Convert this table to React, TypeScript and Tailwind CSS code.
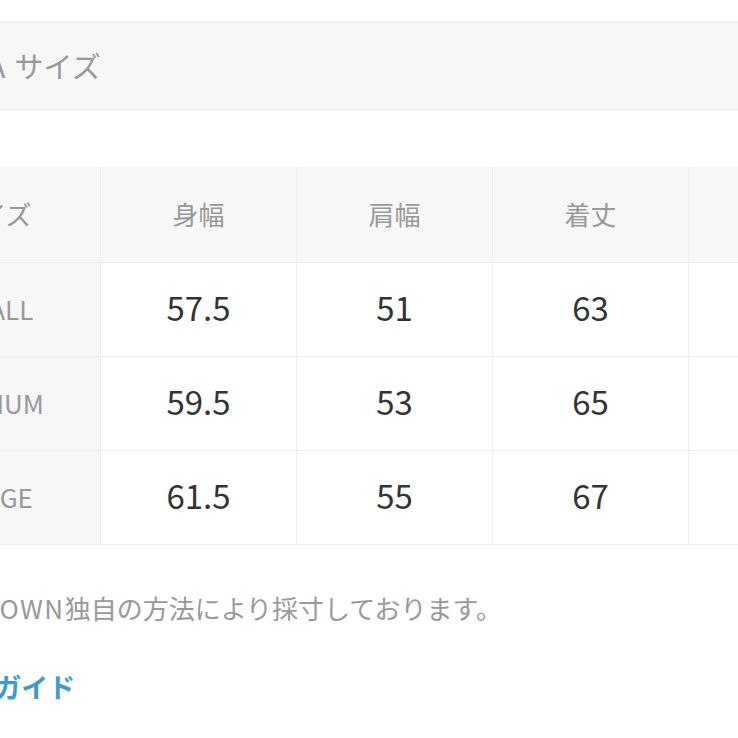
import React from "react";

const cols = ["身幅", "肩幅", "着丈", "袖丈"];
const rows = [
  { label: "SMALL", values: ["57.5", "51", "63", "22"] },
  { label: "MEDIUM", values: ["59.5", "53", "65", "23"] },
  { label: "LARGE", values: ["61.5", "55", "67", "24"] },
];

function SizeTable() {
  return (
    <div className="-ml-[114px] mt-[56px] flex w-[1000px] flex-col border-b border-[#eeeeee]">
      <div className="flex h-[95px] bg-[#f7f7f7]">
        <div className="flex w-[214px] items-center justify-center pb-[2px] text-[26px] text-[#999]">
          サイズ
        </div>
        {cols.map((c) => (
          <div
            key={c}
            className="flex w-[196px] items-center justify-center border-l border-[#eeeeee] pb-[2px] text-[26px] text-[#999]"
          >
            {c}
          </div>
        ))}
      </div>
      {rows.map((r) => (
        <div key={r.label} className="flex h-[94px] border-t border-[#eeeeee]">
          <div className="flex w-[214px] items-center justify-center bg-[#f7f7f7] pb-[2px] text-[26px] text-[#999]">
            {r.label}
          </div>
          {r.values.map((v, i) => (
            <div
              key={i}
              className="flex w-[196px] items-center justify-center border-l border-[#eeeeee] bg-white pb-[4px] text-[33px] text-[#333]"
            >
              {v}
            </div>
          ))}
        </div>
      ))}
    </div>
  );
}

export default function App() {
  return (
    <div className="h-[738px] w-[738px] overflow-hidden bg-white font-['Noto_Sans_CJK_JP',sans-serif]">
      <div className="mt-[21px] flex h-[90px] items-center border-y-2 border-[#f0f0f0] bg-[#f7f7f7]">
        <div className="-ml-[50px] flex whitespace-nowrap text-[29px] text-[#999]">
          <span>USA</span>
          <span className="ml-[9px]">サイズ</span>
        </div>
      </div>
      <SizeTable />
      <p className="-ml-[118px] mt-[45px] whitespace-nowrap text-[26px] leading-[36px] text-[#999]">
        <span className="tracking-[1.5px]">※ZOZOTOWN</span>独自の方法により採寸しております。
      </p>
      <p className="-ml-[86px] mt-[43px] whitespace-nowrap text-[27px] font-bold leading-[36px] text-[#3d9dc4]">
        サイズガイド
      </p>
    </div>
  );
}
